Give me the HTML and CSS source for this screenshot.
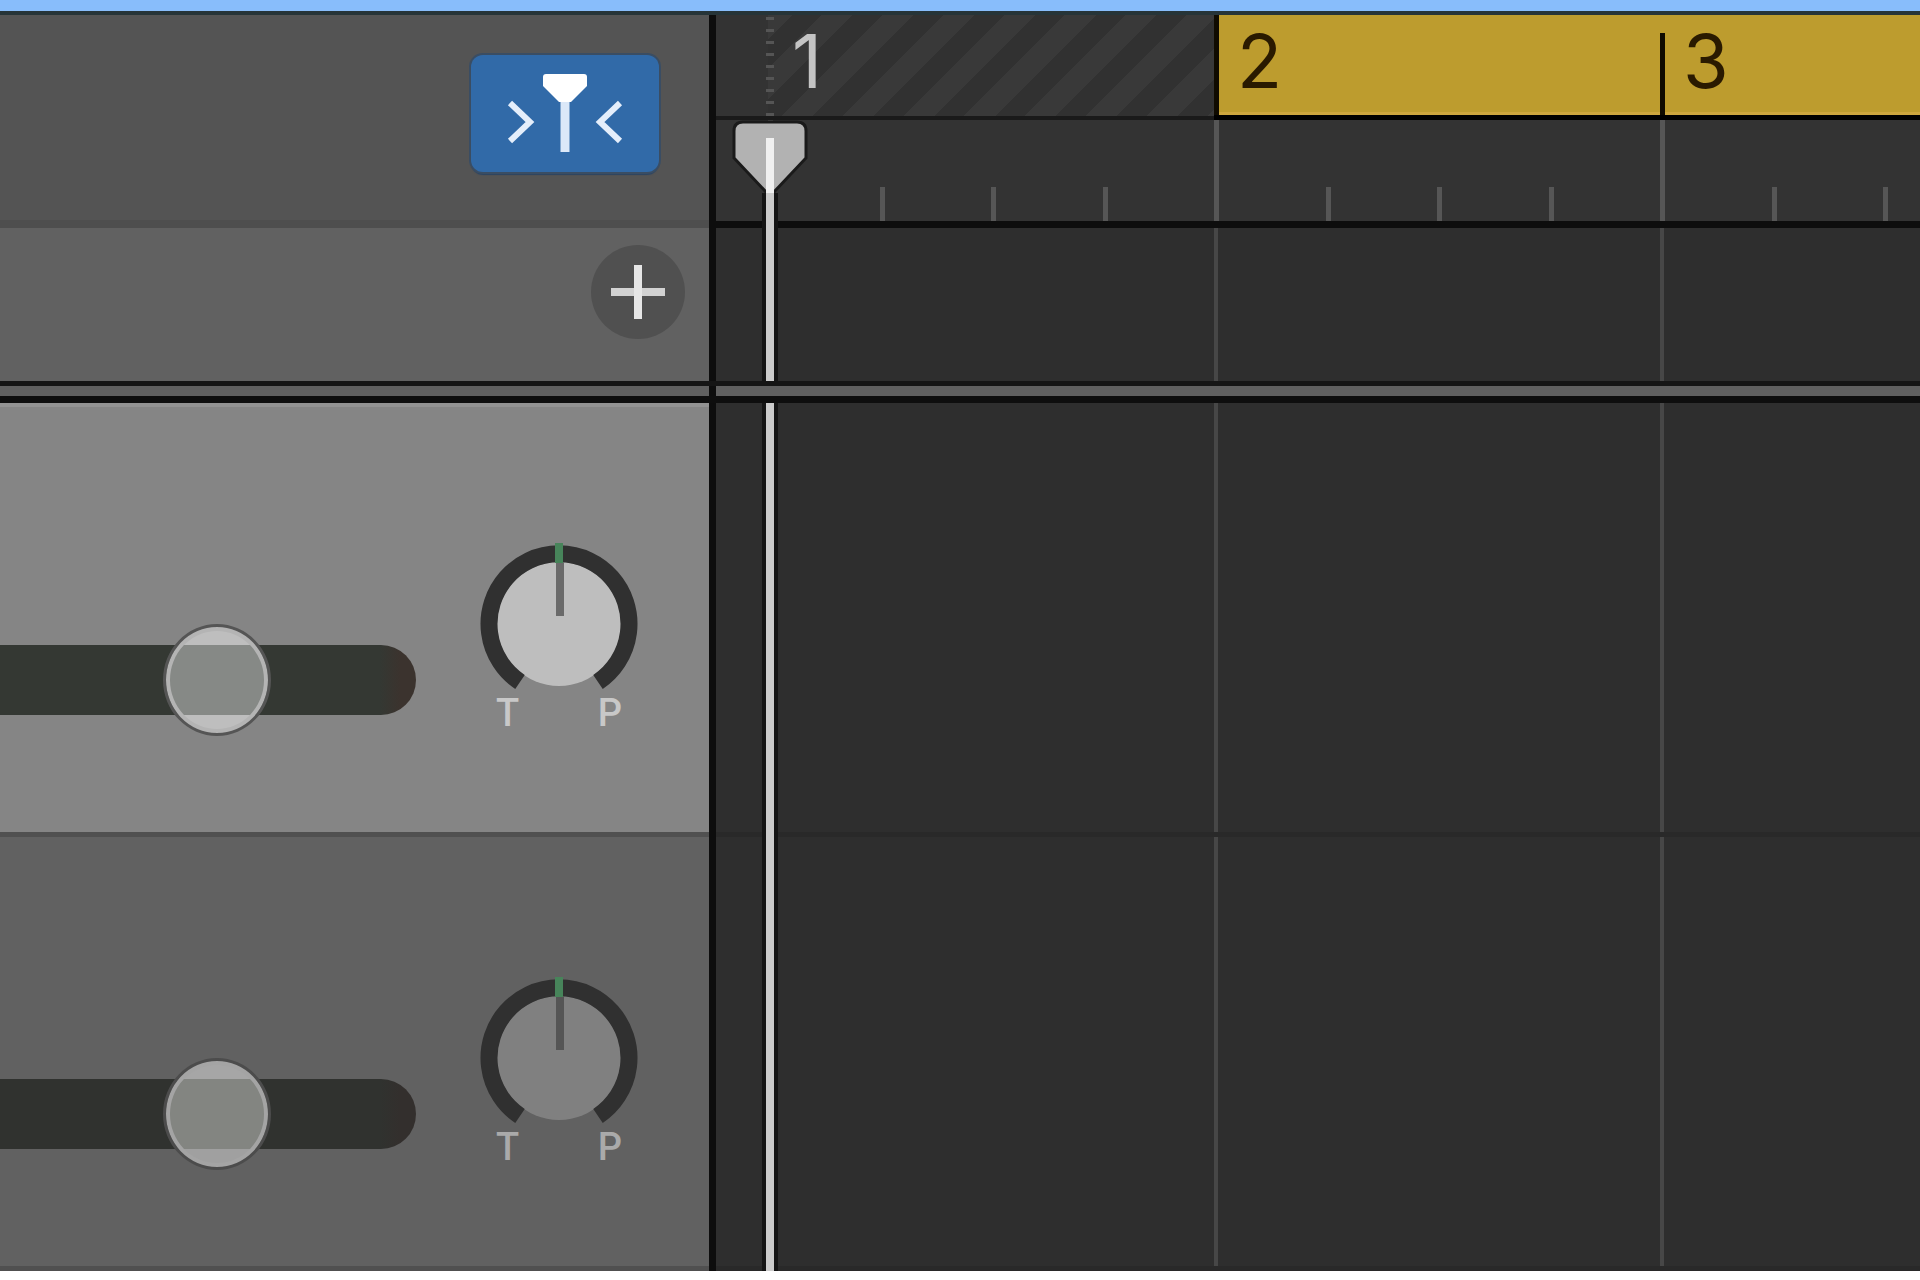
FILE: index.html
```html
<!doctype html>
<html lang="en">
  <head>
    <meta charset="UTF-8" />
    <meta name="viewport" content="width=device-width, initial-scale=1.0" />
    <title>Tracks</title>
    <link rel="stylesheet" href="styles.css">
  </head>
  <body>
    <div class="focus-bar"></div>
    <main class="workspace">
      <!-- ruler -->
      <div class="row">
        <div class="panel toolbar">
          <button class="catch-btn" type="button" aria-label="Catch playhead" aria-pressed="true">
            <svg width="120" height="80" viewBox="0 0 120 80">
              <path d="M5 29L25 48L5 67M115 29L95 48L115 67" fill="none" stroke="#e4eefb" stroke-width="6"/>
              <path d="M60 24V78" stroke="#dbe8f8" stroke-width="9"/>
              <path d="M41 0H79Q82 0 82 3V12L66 28H54L38 12V3Q38 0 41 0Z" fill="#fff"/>
            </svg>
          </button>
        </div>
        <div class="ruler">
          <div class="cycle">
            <div class="lead"></div>
            <div class="bar bar-off"><span>1</span></div>
            <div class="bar bar-on bar-start"><span>2</span></div>
            <div class="bar bar-on"><span>3</span></div>
          </div>
          <div class="beats">
            <div class="lead"></div>
            <div class="bar"><i></i><i></i><i></i><i></i></div>
            <div class="bar"><i></i><i></i><i></i><i></i></div>
            <div class="bar"><i></i><i></i><i></i><i></i></div>
          </div>
        </div>
      </div>

      <!-- add track -->
      <div class="row">
        <div class="panel add-panel">
          <button class="add-btn" type="button" aria-label="Add track">
            <svg width="56" height="56" viewBox="0 0 56 56">
              <path d="M1 28H55" stroke="#d2d2d2" stroke-width="8"/>
              <path d="M28 1V55" stroke="#e6e6e6" stroke-width="8"/>
            </svg>
          </button>
        </div>
        <div class="lane"></div>
      </div>

      <div class="row splitter">
        <div class="panel"></div>
        <div></div>
      </div>

      <!-- tracks -->
      <div class="row track selected">
        <div class="panel track-panel">
          <input class="volume" type="range" min="0" max="100" value="53" aria-label="Volume track 1">
          <div class="pan">
            <svg width="158" height="150" viewBox="0 0 158 150">
              <circle class="knob" cx="79" cy="82" r="62"/>
              <path class="ring" d="M40 140A70 70 0 1 1 118 140"/>
              <path class="needle" d="M80 20V74"/>
              <path class="mark" d="M79 1V21"/>
            </svg>
            <div class="pan-labels"><span>T</span><span>P</span></div>
          </div>
        </div>
        <div class="lane"></div>
      </div>
      <div class="row track">
        <div class="panel track-panel">
          <input class="volume" type="range" min="0" max="100" value="53" aria-label="Volume track 2">
          <div class="pan">
            <svg width="158" height="150" viewBox="0 0 158 150">
              <circle class="knob" cx="79" cy="82" r="62"/>
              <path class="ring" d="M40 140A70 70 0 1 1 118 140"/>
              <path class="needle" d="M80 20V74"/>
              <path class="mark" d="M79 1V21"/>
            </svg>
            <div class="pan-labels"><span>T</span><span>P</span></div>
          </div>
        </div>
        <div class="lane"></div>
      </div>

      <div class="playhead">
        <svg width="80" height="178" viewBox="0 0 80 178">
          <path d="M40 2V102" stroke="#555" stroke-width="8" stroke-dasharray="3 9"/>
          <path d="M13 107H67Q76 107 76 116V143L43 178H37L4 143V116Q4 107 13 107Z" fill="#b2b2b2" stroke="#1a1a1a" stroke-width="3"/>
          <path d="M40 123V178" stroke="#f0f0f0" stroke-width="8"/>
        </svg>
        <div class="stem"></div>
      </div>
    </main>
  </body>
</html>
```
FILE: styles.css
```css
body {
  margin: 0;
  background: #fff;
  font-family: Inter, "Liberation Sans", sans-serif;
  overflow-x: hidden;
}
button {
  padding: 0;
  border: none;
  display: flex;
  align-items: center;
  justify-content: center;
  cursor: pointer;
}
.focus-bar {
  height: 11px;
  background: #88bdfb;
  border-bottom: 4px solid #263438;
}
.workspace {
  position: relative;
  overflow: hidden;
}
.row {
  display: grid;
  grid-template-columns: 716px 1fr;
}
.panel {
  box-sizing: border-box;
  border-right: 7px solid #0d0d0d;
}

/* toolbar */
.toolbar {
  display: flex;
  justify-content: flex-end;
  align-items: flex-start;
  padding: 40px 50px 0 0;
  background: #545454;
  box-shadow: inset 0 -8px #4e4e4e;
}
.catch-btn {
  width: 188px;
  height: 117px;
  border-radius: 12px;
  background: #316aa8;
  box-shadow: 0 0 0 2px #3a4d63, 0 3px 1px #2b4462;
}

/* ruler */
.ruler {
  overflow: hidden;
  background: #333;
  border-bottom: 7px solid #0d0d0d;
}
.cycle,
.beats {
  display: flex;
}
.cycle {
  height: 105px;
  line-height: 92px;
  font-size: 74px;
  color: #c4c4c4;
}
.cycle .lead,
.cycle .bar-off {
  border-bottom: 4px solid #1a1a1a;
}
.lead {
  flex: none;
  width: 52px;
}
.bar {
  flex: none;
  box-sizing: border-box;
  width: 446px;
}
.cycle .bar {
  padding-left: 24px;
}
.bar-off {
  background: repeating-linear-gradient(135deg, #393939 0 17px, #313131 17px 38px, #393939 38px 43px);
}
.cycle .bar-on {
  padding-left: 0;
  display: flex;
  align-items: flex-end;
  background: #bd9c2e;
  border-bottom: 5px solid #000;
  box-shadow: inset 0 -3px #cda63e;
  color: #2a1a00;
}
.bar-on::before {
  content: "";
  width: 5px;
  height: 82px;
  margin-right: 18px;
  background: #100b00;
}
.bar-start::before {
  height: 100%;
}
.bar-on span {
  align-self: flex-start;
}
.beats {
  height: 101px;
}
.beats .bar {
  display: flex;
  align-items: flex-end;
}
.beats i {
  box-sizing: border-box;
  flex: 1;
  height: 34px;
  border-left: 5px solid #565656;
}
.beats i:first-child {
  height: 100%;
}

/* lanes */
.lane {
  background: repeating-linear-gradient(90deg, #474747 0 4px, transparent 4px 446px) 52px 0 no-repeat, #2e2e2e;
}
.add-panel {
  display: flex;
  justify-content: flex-end;
  align-items: flex-start;
  padding: 17px 24px 42px 0;
  background: #616161;
}
.add-btn {
  width: 94px;
  height: 94px;
  border-radius: 50%;
  background: #505050;
}
.splitter {
  position: relative;
  z-index: 2;
  height: 10px;
  border-top: 5px solid #151515;
  border-bottom: 7px solid #0e0e0e;
  background: #606060;
}

/* tracks */
.track-panel {
  display: flex;
  align-items: flex-end;
  gap: 64px;
  padding: 139px 0 103px;
  background: #616161;
  box-shadow: inset 0 -5px #505050;
}
.track .lane {
  box-shadow: inset 0 -5px #292929;
}
.selected .track-panel {
  background: #858585;
  box-shadow: inset 0 4px #929292, inset 0 -5px #505050;
}
.volume {
  appearance: none;
  width: 416px;
  height: 108px;
  margin: 0;
  background: none;
}
.volume::-webkit-slider-runnable-track {
  height: 70px;
  border-radius: 0 35px 35px 0;
  background: linear-gradient(90deg, #30322f 380px, #332f2d 400px);
}
.volume::-webkit-slider-thumb {
  appearance: none;
  box-sizing: border-box;
  width: 108px;
  height: 112px;
  margin-top: -21px;
  border: 3px solid #4c4c4c;
  border-radius: 50%;
  background: linear-gradient(#a6a6a6 18px, #838581 18px 88px, #a0a0a0 88px);
  box-shadow: inset 0 0 0 4px #a4a4a4;
}
.selected .volume::-webkit-slider-runnable-track {
  background: linear-gradient(90deg, #343833 380px, #3b332e 400px);
}
.selected .volume::-webkit-slider-thumb {
  border-color: #555;
  background: linear-gradient(#bebebe 18px, #868986 18px 88px, #bebebe 88px);
  box-shadow: inset 0 0 0 4px #b4b4b4;
}
.pan {
  width: 158px;
}
.pan svg {
  display: block;
}
.knob {
  fill: #808080;
}
.selected .knob {
  fill: #bebebe;
}
.ring {
  fill: none;
  stroke: #303030;
  stroke-width: 17;
}
.needle {
  stroke: #555;
  stroke-width: 8;
}
.selected .needle {
  stroke: #6a6a6a;
}
.mark {
  stroke: #47845a;
  stroke-width: 8;
}
.pan-labels {
  display: flex;
  justify-content: space-between;
  padding: 0 16px;
  font: 500 38px/42px Roboto, "Liberation Sans", sans-serif;
  color: #aaa;
}
.selected .pan-labels {
  color: #c8c8c8;
}

/* playhead */
.playhead {
  position: absolute;
  top: 0;
  bottom: 0;
  left: 730px;
  width: 80px;
  display: flex;
  flex-direction: column;
  align-items: center;
}
.playhead svg {
  flex: none;
}
.stem {
  flex: 1;
  width: 8px;
  background: #ccc;
  border: solid #151515;
  border-width: 0 4px;
}
```
